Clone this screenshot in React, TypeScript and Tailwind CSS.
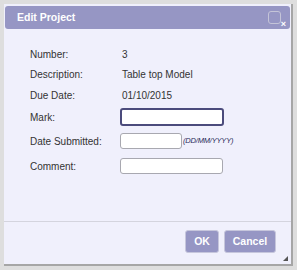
import React from 'react';

const font = { fontFamily: '"Liberation Sans", Arial, sans-serif' };

const Row: React.FC<{ label: string; h: string; children: React.ReactNode }> = ({ label, h, children }) => (
  <div className={`flex items-center ${h}`}>
    <div className="w-[90px] shrink-0 text-[10px] text-[#333]">{label}</div>
    <div className="flex items-center text-[10px] text-[#333]">{children}</div>
  </div>
);

export default function App() {
  return (
    <div className="w-[297px] h-[270px] bg-[#dedede] pt-[4px] pl-[4px]" style={font}>
      <div className="relative w-[289px] h-[262px] bg-[#f0f0fc] border-r-2 border-b-2 border-[#a6a6a6] flex flex-col">
        {/* title bar */}
        <div className="mt-[2px] ml-[1px] mr-[1px] h-[23px] rounded-[3px] bg-[#9696c4] flex items-center justify-between pl-[12px] pr-[4px]">
          <span className="text-white font-bold text-[10.5px]">Edit Project</span>
          <div className="relative w-[13px] h-[13px] mr-[5px] rounded-[3px] border border-[#c4c4d8]">
            <span className="absolute -right-[6px] -bottom-[6px] text-white font-bold text-[9px] leading-none">×</span>
          </div>
        </div>

        {/* form */}
        <div className="pl-[26px] pt-[16px] flex flex-col">
          <Row label="Number:" h="h-[19px]"><span className="pl-[2px]">3</span></Row>
          <Row label="Description:" h="h-[21px]"><span className="pl-[2px]">Table top Model</span></Row>
          <Row label="Due Date:" h="h-[21px]"><span className="pl-[2px]">01/10/2015</span></Row>
          <Row label="Mark:" h="h-[22px]">
            <input className="w-[104px] h-[18px] rounded-[3px] border-2 border-[#4b4b7c] bg-white outline-none" />
          </Row>
          <Row label="Date Submitted:" h="h-[26px]">
            <input className="w-[62px] h-[16px] rounded-[3px] border border-[#a8a8b0] bg-white outline-none" />
            <span className="ml-[1px] italic text-[7.5px] text-[#2a2a5a] tracking-tight">(DD/MM/YYYY)</span>
          </Row>
          <Row label="Comment:" h="h-[24px]">
            <input className="w-[103px] h-[16px] rounded-[3px] border border-[#a8a8b0] bg-white outline-none" />
          </Row>
        </div>

        <div className="flex-1" />
        {/* button pane */}
        <div className="border-t border-[#d4d4de] h-[43px] flex justify-end items-start pt-[8px] pr-[15px] gap-[5px]">
          <button className="w-[34px] h-[23px] rounded-[3px] border border-[#c6c6dc] bg-[#9696c4] text-white font-bold text-[10.5px]">OK</button>
          <button className="w-[52px] h-[23px] rounded-[3px] border border-[#c6c6dc] bg-[#9696c4] text-white font-bold text-[10.5px]">Cancel</button>
        </div>

        {/* resize grip */}
        <svg className="absolute right-[3px] bottom-[3px]" width="6" height="6" viewBox="0 0 6 6">
          <path d="M6 1 L6 6 L1 6 Z" fill="#555" />
        </svg>
      </div>
    </div>
  );
}
